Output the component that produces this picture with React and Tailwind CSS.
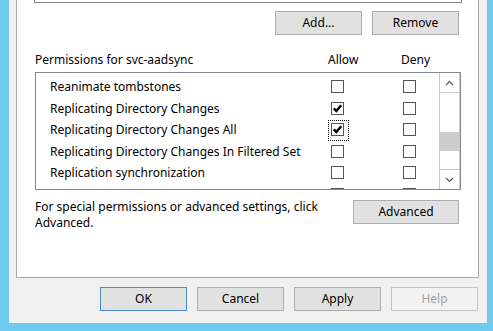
import React from "react";

function Btn({ children, w = "w-[87px]", variant = "normal" }) {
  const base =
    "h-[24px] flex items-center justify-center text-[12px] leading-none border ";
  const styles = {
    normal: "bg-[#e1e1e1] border-[#adadad] text-black",
    default: "bg-[#e1e1e1] border-[#4f8cc9] text-black",
    disabled: "bg-[#f2f2f2] border-[#c4c4c4] text-[#a3a3a3]",
  };
  return <div className={base + w + " " + styles[variant]}>{children}</div>;
}

function Check({ checked, focused }) {
  return (
    <span className="relative block w-[13px] h-[13px] shrink-0">
      {focused && (
        <span className="absolute -left-[3px] -top-[3px] w-[21px] h-[21px] border border-dotted border-black" />
      )}
      <span className="absolute inset-0 border border-[#555555] bg-white flex items-center justify-center">
        {checked && (
          <svg width="11" height="11" viewBox="0 0 11 11">
            <path
              d="M1.8 5.4 L4.3 8 L9.2 2.3"
              fill="none"
              stroke="#000"
              strokeWidth="2.5"
            />
          </svg>
        )}
      </span>
    </span>
  );
}

const rows = [
  { name: "Reanimate tombstones", allow: false },
  { name: "Replicating Directory Changes", allow: true },
  { name: "Replicating Directory Changes All", allow: true, focused: true },
  { name: "Replicating Directory Changes In Filtered Set", allow: false },
  { name: "Replication synchronization", allow: false },
  { name: "", allow: false },
];

function Chevron({ up }) {
  return (
    <svg width="9" height="6" viewBox="0 0 9 6">
      <polyline
        points={up ? "1,5 4.5,1.5 8,5" : "1,1 4.5,4.5 8,1"}
        fill="none"
        stroke="#555"
        strokeWidth="1.2"
      />
    </svg>
  );
}

export default function App() {
  return (
    <div
      className="w-[493px] h-[331px] bg-[#6fcaef] pl-[9px] pr-[6px] pb-[8px] flex text-black"
      style={{ fontFamily: '"Noto Sans", "Liberation Sans", sans-serif' }}
    >
      <div className="flex-1 bg-[#f0f0f0] flex flex-col pl-[7px] pr-[8px]">
        {/* Tab page */}
        <div className="h-[278px] bg-white border-x border-b border-[#a9a9a9] flex flex-col pl-[18px] pr-[17px]">
          <div className="h-[3px] -mx-[1px] border-x border-b border-[#828790]" />
          <div className="mt-[8px] flex justify-end gap-[10px] pr-[2px]">
            <Btn>Add...</Btn>
            <Btn>Remove</Btn>
          </div>
          <div className="mt-[17px] flex text-[12px] leading-[15px] h-[15px]">
            <span className="w-[293px]">Permissions for svc-aadsync</span>
            <span className="w-[73px]">Allow</span>
            <span>Deny</span>
          </div>
          <div className="mt-[5px] h-[118px] border border-[#828790] flex overflow-hidden">
            <div className="flex-1 pt-[3px] overflow-hidden">
              {rows.map((r, i) => (
                <div
                  key={i}
                  className="h-[21.5px] flex items-center text-[12px] leading-[15px] pl-[14px]"
                >
                  <span className="w-[281px] whitespace-nowrap">{r.name}</span>
                  <Check checked={r.allow} focused={r.focused} />
                  <span className="w-[59px]" />
                  <Check checked={false} />
                </div>
              ))}
            </div>
            <div className="w-[21px] flex flex-col border-x border-[#c9c9c9] bg-white">
              <div className="h-[20px] border-b border-[#c9c9c9] flex items-center justify-center">
                <Chevron up />
              </div>
              <div className="h-[39px]" />
              <div className="h-[19px] bg-[#cdcdcd]" />
              <div className="flex-1" />
              <div className="h-[20px] border-t border-[#c9c9c9] flex items-center justify-center">
                <Chevron />
              </div>
            </div>
          </div>
          <div className="mt-[9px] flex items-start">
            <div className="flex-1 text-[12px] leading-[16px]">
              <div>For special permissions or advanced settings, click</div>
              <div>Advanced.</div>
            </div>
            <div className="mr-[2px] mt-[1px]">
              <Btn w="w-[106px]">Advanced</Btn>
            </div>
          </div>
        </div>
        {/* Dialog buttons */}
        <div className="mt-[9px] flex justify-end gap-[10px] pr-[1px]">
          <Btn variant="default">OK</Btn>
          <Btn>Cancel</Btn>
          <Btn>Apply</Btn>
          <Btn variant="disabled">Help</Btn>
        </div>
      </div>
    </div>
  );
}
